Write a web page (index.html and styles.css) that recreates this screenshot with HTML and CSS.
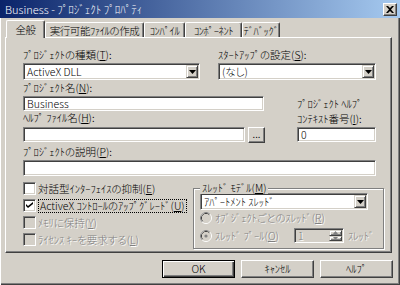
FILE: index.html
```html
<!DOCTYPE html>
<html lang="ja">
<head>
    <meta charset="UTF-8">
    <link rel="stylesheet" href="styles.css">
</head>
<body>
    <div class="window">
        <div class="titlebar">
            <span class="title">Business - ﾌﾟﾛｼﾞｪｸﾄ ﾌﾟﾛﾊﾟﾃｨ</span>
            <span class="close-btn">
                <svg width="8" height="7" viewBox="0 0 8 7"><path d="M0 0h2l2 2 2-2h2L5 3.5 8 7H6L4 5 2 7H0l3-3.5z" fill="#000"/></svg>
            </span>
        </div>

        <div class="tabs">
            <div class="tab tab-active tab-general">全般</div>
            <div class="tab tab-make">実行可能ﾌｧｲﾙの作成</div>
            <div class="tab tab-compile">ｺﾝﾊﾟｲﾙ</div>
            <div class="tab tab-component">ｺﾝﾎﾟｰﾈﾝﾄ</div>
            <div class="tab tab-debug">ﾃﾞﾊﾞｯｸﾞ</div>
        </div>

        <div class="panel">
            <div class="row-top">
                <div class="field-type">
                    <div class="label">ﾌﾟﾛｼﾞｪｸﾄの種類(<u>T</u>):</div>
                    <div class="combo sunken">
                        <span class="combo-value">ActiveX DLL</span>
                        <span class="drop raised"><svg width="7" height="4" viewBox="0 0 7 4"><path d="M0 0h7L3.5 4z" fill="#000"/></svg></span>
                    </div>
                </div>
                <div class="field-startup">
                    <div class="label">ｽﾀｰﾄｱｯﾌﾟの設定(<u>S</u>):</div>
                    <div class="combo sunken">
                        <span class="combo-value">(なし)</span>
                        <span class="drop raised"><svg width="7" height="4" viewBox="0 0 7 4"><path d="M0 0h7L3.5 4z" fill="#000"/></svg></span>
                    </div>
                </div>
            </div>

            <div class="mid">
                <div class="label">ﾌﾟﾛｼﾞｪｸﾄ名(<u>N</u>):</div>
                <div class="text-box sunken name-box">Business</div>
                <div class="label help-label">ﾍﾙﾌﾟ ﾌｧｲﾙ名(<u>H</u>):</div>
                <div class="help-row">
                    <div class="text-box sunken help-box"></div>
                    <div class="dots-btn">...</div>
                </div>
                <div class="context-label">ﾌﾟﾛｼﾞｪｸﾄ ﾍﾙﾌﾟ<br>ｺﾝﾃｷｽﾄ番号(<u>I</u>):</div>
                <div class="text-box sunken context-box">0</div>
            </div>

            <div class="label desc-label">ﾌﾟﾛｼﾞｪｸﾄの説明(<u>P</u>):</div>
            <div class="text-box sunken desc-box"></div>

            <div class="bottom">
                <div class="checks">
                    <div class="check">
                        <span class="check-box"></span>
                        <span>対話型ｲﾝﾀｰﾌｪｲｽの抑制(<u>E</u>)</span>
                    </div>
                    <div class="check">
                        <span class="check-box">
                            <svg width="7" height="7" viewBox="0 0 7 7"><path d="M0 2l2 2 5-4v2L2 6 0 4z" fill="#000"/></svg>
                        </span>
                        <span class="focus">ActiveX ｺﾝﾄﾛｰﾙのｱｯﾌﾟｸﾞﾚｰﾄﾞ(<u>U</u>)</span>
                    </div>
                    <div class="check disabled">
                        <span class="check-box check-off"></span>
                        <span>ﾒﾓﾘに保持(<u>Y</u>)</span>
                    </div>
                    <div class="check disabled">
                        <span class="check-box check-off"></span>
                        <span>ﾗｲｾﾝｽ&nbsp;ｷｰを要求する(<u>L</u>)</span>
                    </div>
                </div>

                <div class="group">
                    <span class="legend">ｽﾚｯﾄﾞ ﾓﾃﾞﾙ(<u>M</u>)</span>
                    <div class="combo sunken thread-combo">
                        <span class="combo-value">ｱﾊﾟｰﾄﾒﾝﾄ ｽﾚｯﾄﾞ</span>
                        <span class="drop raised"><svg width="7" height="4" viewBox="0 0 7 4"><path d="M0 0h7L3.5 4z" fill="#000"/></svg></span>
                    </div>
                    <div class="radio disabled">
                        <svg class="radio-dot" width="12" height="12" viewBox="0 0 12 12">
                            <circle cx="6" cy="6" r="5.5" fill="none" stroke="#fff"/>
                            <path d="M2.11 9.89A5.5 5.5 0 0 1 9.89 2.11" fill="none" stroke="#808080"/>
                            <circle cx="6" cy="6" r="4.5" fill="none" stroke="#d4d0c8"/>
                            <path d="M2.82 9.18A4.5 4.5 0 0 1 9.18 2.82" fill="none" stroke="#404040"/>
                            <circle cx="6" cy="6" r="4" fill="#d4d0c8"/>
                        </svg>
                        <span>ｵﾌﾞｼﾞｪｸﾄごとのｽﾚｯﾄﾞ(<u>R</u>)</span>
                    </div>
                    <div class="radio radio-pool disabled">
                        <svg class="radio-dot" width="12" height="12" viewBox="0 0 12 12">
                            <circle cx="6" cy="6" r="5.5" fill="none" stroke="#fff"/>
                            <path d="M2.11 9.89A5.5 5.5 0 0 1 9.89 2.11" fill="none" stroke="#808080"/>
                            <circle cx="6" cy="6" r="4.5" fill="none" stroke="#d4d0c8"/>
                            <path d="M2.82 9.18A4.5 4.5 0 0 1 9.18 2.82" fill="none" stroke="#404040"/>
                            <circle cx="6" cy="6" r="4" fill="#d4d0c8"/>
                            <circle cx="6" cy="6" r="1.6" fill="#808080"/>
                        </svg>
                        <span class="radio-text">ｽﾚｯﾄﾞ ﾌﾟｰﾙ(<u>O</u>)</span>
                        <div class="spin sunken">
                            <span class="spin-value">1</span>
                            <span class="spin-btns">
                                <span class="spin-btn raised"><svg width="5" height="3" viewBox="0 0 5 3"><path d="M0 3h5L2.5 0z" fill="#808080"/></svg></span>
                                <span class="spin-btn raised"><svg width="5" height="3" viewBox="0 0 5 3"><path d="M0 0h5L2.5 3z" fill="#808080"/></svg></span>
                            </span>
                        </div>
                        <span class="spin-unit">ｽﾚｯﾄﾞ</span>
                    </div>
                </div>
            </div>
        </div>

        <div class="buttons">
            <div class="btn btn-default">OK</div>
            <div class="btn">ｷｬﾝｾﾙ</div>
            <div class="btn">ﾍﾙﾌﾟ</div>
        </div>
    </div>
</body>
</html>
```

FILE: styles.css
```css
* {
    box-sizing: border-box;
}
body {
    margin: 0;
    background: #d4d0c8;
    font-family: "Noto Sans CJK JP", sans-serif;
    font-size: 10.5px;
    font-weight: 300;
    font-feature-settings: "palt";
    line-height: 12px;
    color: #000;
}
u {
    text-underline-offset: 1px;
}

/* window frame */
.window {
    width: 400px;
    height: 285px;
    display: flex;
    flex-direction: column;
    background: #d4d0c8;
    box-shadow: inset 1px 0 0 #fff, inset -1px -1px 0 #404040, inset -2px -2px 0 #808080;
}
.titlebar {
    height: 18px;
    display: flex;
    align-items: center;
    padding: 0 3px 0 5px;
    background: linear-gradient(to right, #0a246a, #a6caf0);
    color: #fff;
    font-size: 11px;
}
.close-btn {
    margin-left: auto;
    width: 14px;
    height: 13px;
    display: flex;
    align-items: center;
    justify-content: center;
    background: #d4d0c8;
    border: 1px solid;
    border-color: #fff #404040 #404040 #fff;
    box-shadow: inset -1px -1px 0 #808080;
}

/* 3d borders */
.sunken {
    background: #fff;
    border: 1px solid;
    border-color: #808080 #fff #fff #808080;
    box-shadow: inset 1px 1px 0 #404040, inset -1px -1px 0 #d4d0c8;
    padding: 1px;
}
.raised {
    background: #d4d0c8;
    border: 1px solid;
    border-color: #d4d0c8 #404040 #404040 #d4d0c8;
    box-shadow: inset 1px 1px 0 #fff, inset -1px -1px 0 #808080;
}

/* tabs */
.tabs {
    display: flex;
    align-items: flex-end;
    height: 19px;
    padding-left: 6px;
}
.tab {
    height: 15px;
    padding-top: 2px;
    text-align: center;
    white-space: nowrap;
    letter-spacing: -0.4px;
    border: 1px solid;
    border-bottom: none;
    border-color: #fff #404040 #fff #fff;
    box-shadow: inset -1px 0 0 #808080;
    border-radius: 2px 2px 0 0;
}
.tab-active {
    height: 18px;
    padding-top: 3px;
    margin-bottom: -1px;
    position: relative;
    z-index: 1;
    background: #d4d0c8;
}
.tab-general { width: 39px; }
.tab-make { width: 99px; }
.tab-compile { width: 41px; }
.tab-component { width: 57px; }
.tab-debug { width: 38px; }

/* panel */
.panel {
    margin-left: 5px;
    width: 387px;
    height: 216px;
    border: 1px solid;
    border-color: #fff #404040 #404040 #fff;
    box-shadow: inset -1px -1px 0 #808080;
    padding: 11px 0 0 17px;
}
.label {
    height: 12px;
    white-space: nowrap;
}
.row-top {
    display: flex;
    gap: 18px;
}
.field-type { width: 177px; }
.field-startup { width: 158px; }
.combo {
    margin-top: 2px;
    height: 17px;
    display: flex;
}
.combo-value {
    flex: 1;
    padding-left: 2px;
    line-height: 13px;
    white-space: nowrap;
}
.drop {
    width: 12px;
    height: 13px;
    display: flex;
    align-items: center;
    justify-content: center;
}

.mid {
    margin-top: 2px;
    display: grid;
    grid-template-columns: 242px 79px;
    grid-template-rows: 14px 16px 15px 16px;
    column-gap: 32px;
}
.text-box {
    height: 15px;
    padding-left: 3px;
    line-height: 11px;
    white-space: nowrap;
}
.name-box {
    grid-column: 1;
    grid-row: 2;
    width: 241px;
}
.help-label {
    grid-column: 1;
    grid-row: 3;
}
.help-row {
    grid-column: 1;
    grid-row: 4;
    display: flex;
    gap: 3px;
}
.help-box { width: 222px; }
.dots-btn {
    width: 17px;
    height: 16px;
    text-align: center;
    line-height: 12px;
    background: #d4d0c8;
    border: 1px solid;
    border-color: #fff #404040 #404040 #fff;
    box-shadow: inset -1px -1px 0 #808080;
}
.context-label {
    grid-column: 2;
    grid-row: 1 / 4;
    align-self: end;
    margin-bottom: 1px;
    line-height: 15px;
    white-space: nowrap;
}
.context-box {
    grid-column: 2;
    grid-row: 4;
}
.desc-label {
    margin-top: 3px;
}
.desc-box {
    margin-top: 2px;
    width: 353px;
    height: 16px;
}

/* checkboxes and thread model */
.bottom {
    margin-top: 4px;
    display: flex;
}
.checks {
    width: 170px;
}
.check {
    height: 17px;
    display: flex;
    align-items: center;
    gap: 2px;
    white-space: nowrap;
}
.check-box {
    width: 13px;
    height: 13px;
    flex: none;
    display: flex;
    align-items: center;
    justify-content: center;
    background: #fff;
    border: 1px solid;
    border-color: #808080 #fff #fff #808080;
    box-shadow: inset 1px 1px 0 #404040, inset -1px -1px 0 #d4d0c8;
}
.check-off {
    background: #d4d0c8;
}
.focus {
    outline: 1px dotted #000;
    outline-offset: 0;
    padding: 0 1px;
    margin-left: 1px;
}
.disabled {
    color: #808080;
    text-shadow: 1px 1px 0 #fff;
}

.group {
    position: relative;
    margin-top: 8px;
    width: 191px;
    height: 61px;
    border: 1px solid #808080;
    box-shadow: inset 1px 1px 0 #fff, 1px 1px 0 #fff;
    padding: 4px 0 0 6px;
}
.legend {
    position: absolute;
    top: -7px;
    left: 6px;
    padding: 0 2px;
    background: #d4d0c8;
    white-space: nowrap;
}
.thread-combo {
    margin-top: 0;
    width: 168px;
}
.radio {
    height: 14px;
    margin-top: 1px;
    display: flex;
    align-items: center;
    gap: 3px;
    white-space: nowrap;
}
.radio-dot {
    flex: none;
}
.radio-pool {
    height: 15px;
    margin-top: 3px;
}
.radio-text {
    width: 76px;
}
.spin {
    width: 50px;
    height: 15px;
    display: flex;
    background: #d4d0c8;
}
.spin-value {
    flex: 1;
    padding-left: 2px;
    line-height: 11px;
}
.spin-btns {
    width: 13px;
    display: flex;
    flex-direction: column;
}
.spin-btn {
    flex: 1;
    display: flex;
    align-items: center;
    justify-content: center;
}
.spin-unit {
    margin-left: 1px;
}

/* dialog buttons */
.buttons {
    display: flex;
    justify-content: flex-end;
    gap: 6px;
    padding-right: 7px;
    margin-top: 7px;
}
.btn {
    width: 73px;
    height: 18px;
    text-align: center;
    line-height: 16px;
    background: #d4d0c8;
    border: 1px solid;
    border-color: #fff #404040 #404040 #fff;
    box-shadow: inset -1px -1px 0 #808080;
}
.btn-default {
    border-color: #000;
    box-shadow: inset 1px 1px 0 #fff, inset -1px -1px 0 #404040, inset -2px -2px 0 #808080;
}
```
